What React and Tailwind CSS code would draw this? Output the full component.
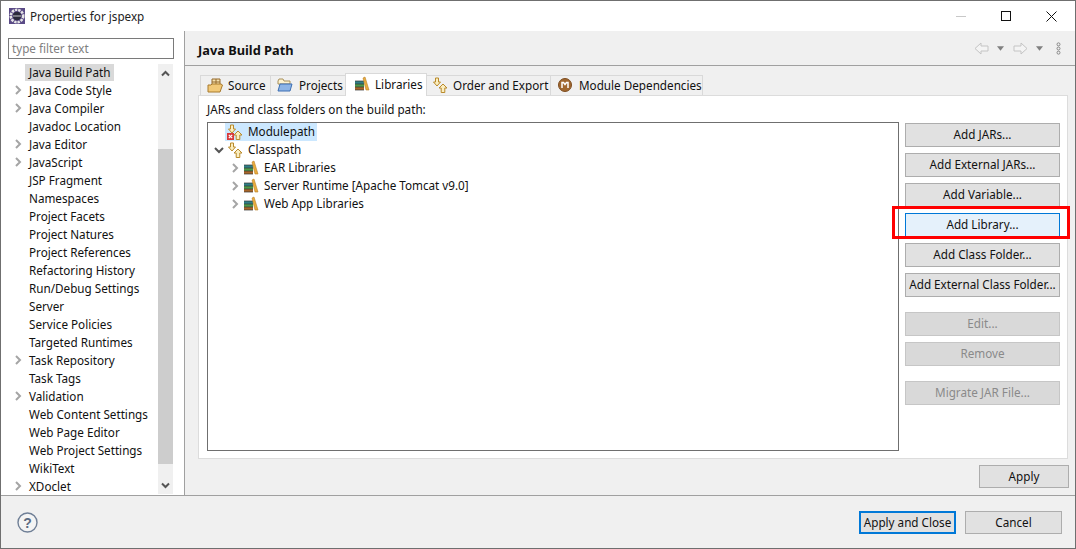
function Chevron({ open, className = "" }) {
  return (
    <svg width="10" height="10" viewBox="0 0 10 10" className={className} fill="none" strokeWidth="2">
      {open ? <path d="M1 3 L5 7 L9 3" stroke="#555" /> : <path d="M3 1 L7 5 L3 9" stroke="#a5a5a5" />}
    </svg>
  );
}

function LibIcon() {
  return (
    <svg width="16" height="16" viewBox="0 0 16 16" className="shrink-0">
      <rect x="1" y="5" width="9" height="3" fill="#2f7f86" />
      <rect x="1" y="8" width="9" height="3" fill="#4f9a4a" />
      <rect x="1" y="11" width="9" height="3" fill="#a8662a" />
      <path d="M1 5h9M1 8h9M1 11h9M1 14h9" stroke="#333" strokeWidth="0.7" />
      <path d="M9 2 L11 1 L15 14 L12 14 Z" fill="#e9ad3e" stroke="#b9802a" strokeWidth="0.6" />
    </svg>
  );
}

function ArrowsIcon({ error }) {
  return (
    <svg width="18" height="17" viewBox="0 0 18 17" className="shrink-0">
      <path d="M4.5 1h3v4h2L6 9 2.5 5h2z" fill="#fbeec0" stroke="#b98a2b" />
      <path d="M12 7l4 4h-2.2v4.5h-3.6V11H8z" fill="#fbeec0" stroke="#b98a2b" />
      {error && <rect x="1" y="9" width="7" height="7" fill="#d8393c" />}
      {error && <path d="M2.8 10.8l3.4 3.4M6.2 10.8l-3.4 3.4" stroke="#fff" strokeWidth="1.2" />}
    </svg>
  );
}

function SourceIcon() {
  return (
    <svg width="16" height="15" viewBox="0 0 16 15" className="shrink-0">
      <path d="M5 1h8v6H5z" fill="#f6e2b0" stroke="#94682a" />
      <path d="M9 1v6M5 4h8" stroke="#94682a" />
      <path d="M1 7h3l1-1h9l1.5 1-2.5 7H1z" fill="#f2c978" stroke="#a87a2c" />
    </svg>
  );
}

function ProjectsIcon() {
  return (
    <svg width="16" height="14" viewBox="0 0 16 14" className="shrink-0">
      <path d="M1 3l1-2h4l1 2h6v3H1z" fill="#fdf2cf" stroke="#a88f5a" />
      <path d="M1 13l2-7h12l-2 7z" fill="#8db4e6" stroke="#3c6fb3" />
    </svg>
  );
}

function ModuleIcon() {
  return (
    <svg width="14" height="14" viewBox="0 0 14 14" className="shrink-0">
      <circle cx="7" cy="7" r="6.5" fill="#a0672f" />
      <circle cx="7" cy="7" r="6.5" fill="none" stroke="#7d4d20" />
      <path d="M4 10V4.5h1.5L7 6.5l1.5-2H10V10" fill="none" stroke="#fff" strokeWidth="1.5" />
    </svg>
  );
}

function Tab({ icon, label, active, className = "" }) {
  return active ? (
    <div className={`relative z-10 flex items-center gap-[5px] h-[23px] -mb-px bg-white border border-b-0 border-[#d9d9d9] pl-[8px] pr-[8px] pb-[3px] whitespace-nowrap ${className}`}>
      {icon}
      <span>{label}</span>
    </div>
  ) : (
    <div className={`flex items-center h-[20px] pb-px bg-[#f0f0f0] border border-b-0 border-[#d9d9d9] -mr-px whitespace-nowrap ${className}`}>
      {icon}
      <span>{label}</span>
    </div>
  );
}

function Btn({ label, disabled, focus, className = "" }) {
  const base = "flex items-center justify-center h-[24px] border whitespace-nowrap ";
  const state = focus
    ? "bg-[#e5f1fb] border-[#0078d7] text-[#111]"
    : disabled
    ? "bg-[#d9d9d9] border-[#c6c6c6] text-[#8a8a8a]"
    : "bg-[#e1e1e1] border-[#adadad] text-[#111]";
  return <div className={base + state + " " + className}>{label}</div>;
}

const treeItems = [
  ["Java Build Path", false, true],
  ["Java Code Style", true],
  ["Java Compiler", true],
  ["Javadoc Location", false],
  ["Java Editor", true],
  ["JavaScript", true],
  ["JSP Fragment", false],
  ["Namespaces", false],
  ["Project Facets", false],
  ["Project Natures", false],
  ["Project References", false],
  ["Refactoring History", false],
  ["Run/Debug Settings", false],
  ["Server", false],
  ["Service Policies", false],
  ["Targeted Runtimes", false],
  ["Task Repository", true],
  ["Task Tags", false],
  ["Validation", true],
  ["Web Content Settings", false],
  ["Web Page Editor", false],
  ["Web Project Settings", false],
  ["WikiText", false],
  ["XDoclet", true],
];

export default function App() {
  return (
    <div className="relative w-[1076px] h-[549px] overflow-hidden bg-white border border-[#6f6f6f] text-[11.7px] leading-[18px] text-[#111] flex flex-col" style={{ fontFamily: '"Noto Sans", sans-serif' }}>
      {/* title bar */}
      <div className="h-[30px] flex items-center shrink-0">
        <svg width="16" height="16" viewBox="0 0 16 16" className="ml-[8px]">
          <rect width="16" height="16" fill="#5a4a86" />
          <circle cx="8" cy="8" r="6.2" fill="none" stroke="#e6e6e6" strokeWidth="2.6" strokeDasharray="2.4 0.9" />
          <circle cx="8" cy="8" r="4.2" fill="#2b2b3a" />
          <rect x="4" y="7.5" width="8" height="1" fill="#c9c9c9" />
        </svg>
        <span className="ml-[5px] text-[#222]">Properties for jspexp</span>
        <div className="ml-auto flex items-center">
          <div className="w-[10px] h-px bg-[#c8c8c8] mr-[35px]" />
          <div className="w-[10px] h-[10px] border border-[#111] mr-[35px]" />
          <svg width="11" height="11" viewBox="0 0 11 11" className="mr-[18px]"><path d="M0.5 0.5l10 10M10.5 0.5l-10 10" stroke="#111" /></svg>
        </div>
      </div>

      <div className="flex flex-1 min-h-0">
        {/* sidebar */}
        <div className="w-[184px] shrink-0 border-r border-[#a0a0a0] pl-[7px] pt-[7px] h-[464px]">
          <div className="w-[166px] h-[21px] pb-[2px] border border-[#7a7a7a] flex items-center pl-[3px] text-[#808080]">type filter text</div>
          <div className="flex mt-[5px] h-[430px] w-[165px] overflow-hidden">
            <div className="flex-1 min-w-0 -mt-px">
              {treeItems.map(([t, exp, sel]) => (
                <div key={t} className="h-[18px] flex items-center">
                  <div className="w-[21px] shrink-0 flex justify-center pr-[2px]">{exp && <Chevron />}</div>
                  <span className={sel ? "bg-[#d9d9d9] -ml-[4px] px-[4px] text-[#111]" : "whitespace-nowrap"}>{t}</span>
                </div>
              ))}
            </div>
            <div className="w-[15px] shrink-0 bg-[#f0f0f0] flex flex-col">
              <div className="h-[18px] flex items-center justify-center">
                <svg width="9" height="7" viewBox="0 0 9 7"><path d="M1 5.5l3.5-3.5L8 5.5" stroke="#555" strokeWidth="2" fill="none" /></svg>
              </div>
              <div className="mt-[67px] h-[315px] bg-[#cdcdcd]" />
              <div className="mt-auto h-[18px] flex items-center justify-center">
                <svg width="9" height="7" viewBox="0 0 9 7"><path d="M1 1.5l3.5 3.5L8 1.5" stroke="#555" strokeWidth="2" fill="none" /></svg>
              </div>
            </div>
          </div>
        </div>

        {/* right pane */}
        <div className="flex-1 min-w-0 bg-[#f0f0f0] flex flex-col h-[464px]">
          <div className="h-[35px] shrink-0 border-b border-[#a0a0a0] flex items-center pl-[13px]">
            <span className="font-bold text-[12.8px] mt-[4px]">Java Build Path</span>
            <div className="ml-auto flex items-center mr-[14px]">
              <svg width="15" height="13" viewBox="0 0 15 13"><path d="M1 6.5L7 1v3h7v5H7v3z" fill="#f4f4f4" stroke="#c4c4c4" /></svg>
              <svg width="7" height="5" viewBox="0 0 8 5" className="ml-[8px]"><path d="M0 0h8L4 5z" fill="#808080" /></svg>
              <svg width="15" height="13" viewBox="0 0 15 13" className="ml-[9px]"><path d="M14 6.5L8 1v3H1v5h7v3z" fill="#f4f4f4" stroke="#c4c4c4" /></svg>
              <svg width="7" height="5" viewBox="0 0 8 5" className="ml-[8px]"><path d="M0 0h8L4 5z" fill="#808080" /></svg>
              <svg width="5" height="15" viewBox="0 0 6 15" className="ml-[13px]"><g fill="none" stroke="#777"><circle cx="3" cy="2.5" r="1.8" /><circle cx="3" cy="7.5" r="1.8" /><circle cx="3" cy="12.5" r="1.8" /></g></svg>
            </div>
          </div>

          <div className="pl-[13px] pr-[6px] pt-[9px] flex flex-col flex-1 min-h-0">
            {/* tabs */}
            <div className="flex items-end h-[20px] pl-[2px] shrink-0">
              <Tab icon={<SourceIcon />} label="Source" className="w-[71px] pl-[6px] gap-[5px]" />
              <Tab icon={<ProjectsIcon />} label="Projects" className="w-[76px] pl-[6px] gap-[6px]" />
              <Tab active icon={<LibIcon />} label="Libraries" className="w-[82px]" />
              <Tab icon={<ArrowsIcon />} label="Order and Export" className="w-[125px] pl-[4px] gap-[4px] -ml-px" />
              <Tab icon={<ModuleIcon />} label="Module Dependencies" className="w-[153px] pl-[7px] gap-[7px]" />
            </div>
            {/* tab content */}
            <div className="w-[870px] h-[364px] bg-white border border-[#dcdcdc] pl-[8px] pt-[4px] shrink-0">
              <div className="h-[18px] flex items-center">JARs and class folders on the build path:</div>
              <div className="flex mt-[4px] items-start">
                <div className="w-[692px] h-[329px] border border-[#6f6f6f] shrink-0">
                  <div className="h-[18px] flex items-center pl-[17px]">
                    <div className="flex items-center bg-[#cce8ff] pr-[2px] h-[18px] gap-[4px] pl-[1px]">
                      <ArrowsIcon error />
                      <span className="pb-[2px]">Modulepath</span>
                    </div>
                  </div>
                  <div className="h-[18px] flex items-center pl-[6px]">
                    <Chevron open />
                    <div className="flex items-center gap-[4px] ml-[2px]">
                      <ArrowsIcon />
                      <span className="pb-[2px]">Classpath</span>
                    </div>
                  </div>
                  {["EAR Libraries", "Server Runtime [Apache Tomcat v9.0]", "Web App Libraries"].map((t) => (
                    <div key={t} className="h-[18px] flex items-center pl-[22px]">
                      <Chevron />
                      <div className="ml-[3px] flex items-center gap-[5px]">
                        <LibIcon />
                        <span className="pb-[2px]">{t}</span>
                      </div>
                    </div>
                  ))}
                </div>
                <div className="ml-[6px] w-[155px] flex flex-col shrink-0 pt-px">
                  <Btn label="Add JARs..." className="pb-[3px]" />
                  <Btn label="Add External JARs..." className="mt-[6px] pb-[3px]" />
                  <Btn label="Add Variable..." className="mt-[6px] pb-[3px]" />
                  <Btn label="Add Library..." focus className="mt-[6px] pb-[3px]" />
                  <Btn label="Add Class Folder..." className="mt-[6px] pb-[3px]" />
                  <Btn label="Add External Class Folder..." className="mt-[6px] pb-[3px]" />
                  <Btn label="Edit..." disabled className="mt-[15px] pb-[3px]" />
                  <Btn label="Remove" disabled className="mt-[6px] pb-[3px]" />
                  <Btn label="Migrate JAR File..." disabled className="mt-[15px] pb-[3px]" />
                </div>
              </div>
            </div>
            <div className="flex justify-end mt-[6px]">
              <Btn label="Apply" className="w-[90px] !h-[23px] pb-px" />
            </div>
          </div>
        </div>
      </div>

      {/* footer */}
      <div className="h-[53px] shrink-0 bg-[#f0f0f0] border-t border-[#a0a0a0] flex items-center relative">
        <svg width="21" height="21" viewBox="0 0 21 21" className="ml-[16px]">
          <circle cx="10.5" cy="10.5" r="9.5" fill="#f4f4f4" stroke="#6f7f96" strokeWidth="1.4" />
          <text x="10.5" y="15.5" textAnchor="middle" fontSize="14" fontWeight="700" fill="#5b6b82" fontFamily="Liberation Sans, sans-serif">?</text>
        </svg>
        <div className="ml-auto flex items-center mr-[13px] gap-[9px]">
          <div className="w-[97px] h-[23px] flex items-center justify-center bg-[#e1e1e1] border-2 border-[#0078d7]">Apply and Close</div>
          <div className="w-[97px] h-[23px] flex items-center justify-center bg-[#e1e1e1] border border-[#adadad]">Cancel</div>
        </div>
      </div>

      {/* red annotation */}
      <div className="absolute left-[891px] top-[205px] w-[178px] h-[33px] border-[3px] border-[#ff0000] pointer-events-none" />
    </div>
  );
}
